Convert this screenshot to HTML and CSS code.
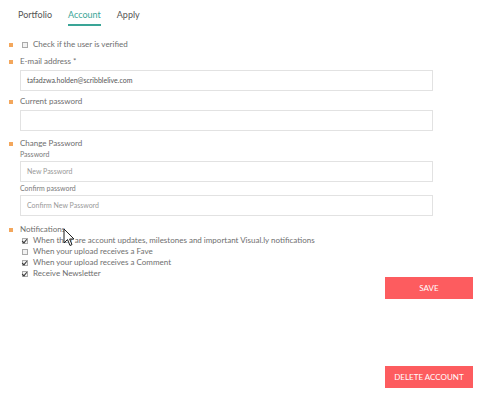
FILE: index.html
```html
<!DOCTYPE html>
<html lang="en">
<head>
  <meta charset="UTF-8">
  <title>Account settings</title>
  <link rel="stylesheet" href="styles.css">
</head>
<body>
  <div class="page">
    <div class="tabs">
      <span class="tab">Portfolio</span>
      <span class="tab active">Account</span>
      <span class="tab">Apply</span>
    </div>

    <div class="form">
      <div class="field check-field">
        <span class="bullet"></span>
        <div class="body">
          <label class="check"><span class="box"></span>Check if the user is verified</label>
        </div>
      </div>

      <div class="field email-field">
        <span class="bullet"></span>
        <div class="body">
          <div class="label">E-mail address *</div>
          <div class="input">tafadzwa.holden@scribblelive.com</div>
        </div>
      </div>

      <div class="field current-field">
        <span class="bullet"></span>
        <div class="body">
          <div class="label">Current password</div>
          <div class="input"></div>
        </div>
      </div>

      <div class="field change-field">
        <span class="bullet"></span>
        <div class="body">
          <div class="label">Change Password</div>
          <div class="sublabel">Password</div>
          <div class="input placeholder">New Password</div>
          <div class="sublabel">Confirm password</div>
          <div class="input placeholder">Confirm New Password</div>
        </div>
      </div>

      <div class="field notify-field">
        <span class="bullet"></span>
        <div class="body">
          <div class="label">Notifications</div>
          <label class="check"><span class="box on"></span>When their are account updates, milestones and important Visual.ly notifications</label>
          <label class="check"><span class="box"></span>When your upload receives a Fave</label>
          <label class="check"><span class="box on"></span>When your upload receives a Comment</label>
          <label class="check"><span class="box on"></span>Receive Newsletter</label>
        </div>
      </div>

      <div class="actions">
        <button class="btn">SAVE</button>
      </div>
      <div class="actions danger">
        <button class="btn">DELETE ACCOUNT</button>
      </div>
    </div>

    <svg class="cursor" width="12" height="19" viewBox="0 0 12 19">
      <path d="M1 1 L1 15 L4.5 11.5 L7 17.5 L9 16.6 L6.6 11 L11 11 Z" fill="#fff" stroke="#222" stroke-width="1"/>
    </svg>
  </div>
</body>
</html>
```

FILE: styles.css
```css
body {
  margin: 0;
  background: #fff;
  font-family: Lato, "Open Sans", sans-serif;
  color: #6e6e6e;
}
.page {
  position: relative;
  width: 488px;
  height: 394px;
}

/* tabs */
.tabs {
  display: flex;
  gap: 16px;
  padding: 8px 0 0 18px;
  height: 22px;
}
.tab {
  font-size: 9px;
  line-height: 14px;
  color: #555;
  height: 16px;
}
.tab.active {
  color: #3aa597;
  border-bottom: 2px solid #3aa597;
}

/* form */
.form {
  padding: 0 15px 0 9px;
}
.field {
  display: flex;
}
.bullet {
  flex: none;
  width: 4px;
  height: 4px;
  margin: 4px 7px 0 0;
  background: #f3a75c;
}
.body {
  flex: 1;
  display: flex;
  flex-direction: column;
}
.check-field { margin-top: 9px; }
.email-field { margin-top: 6px; }
.current-field { margin-top: 5px; }
.change-field { margin-top: 7px; }
.notify-field { margin-top: 8px; }

.label {
  font-size: 8px;
  line-height: 11px;
  margin-bottom: 3px;
}
.change-field .label,
.notify-field .label {
  margin-bottom: 0;
}
.sublabel {
  font-size: 7px;
  line-height: 10px;
  margin-bottom: 2px;
  color: #7a7a7a;
}
.input + .sublabel {
  margin-top: 1px;
}
.input {
  box-sizing: border-box;
  width: 413px;
  height: 21px;
  border: 1px solid #e2e2e2;
  font-size: 7px;
  line-height: 19px;
  padding-left: 6px;
  color: #555;
}
.input.placeholder {
  color: #999;
}

.check {
  display: flex;
  align-items: center;
  font-size: 8px;
  line-height: 11px;
  margin-left: 2px;
}
.box {
  box-sizing: border-box;
  width: 6px;
  height: 6px;
  margin-right: 5px;
  border: 1px solid #aaa;
  background: #f2f2f2;
  position: relative;
}
.box.on::after {
  content: "";
  position: absolute;
  left: 0px;
  top: -1px;
  width: 2px;
  height: 4px;
  border: solid #333;
  border-width: 0 1.5px 1.5px 0;
  transform: rotate(40deg);
}

.actions {
  display: flex;
  justify-content: flex-end;
  margin-top: -2px;
}
.actions.danger {
  margin-top: 67px;
}
.btn {
  width: 88px;
  height: 22px;
  border: none;
  background: #fd5c5f;
  color: #fff;
  font-family: Lato, "Open Sans", sans-serif;
  font-size: 8px;
  padding: 0;
}

.cursor {
  position: absolute;
  left: 63px;
  top: 228px;
}
```
